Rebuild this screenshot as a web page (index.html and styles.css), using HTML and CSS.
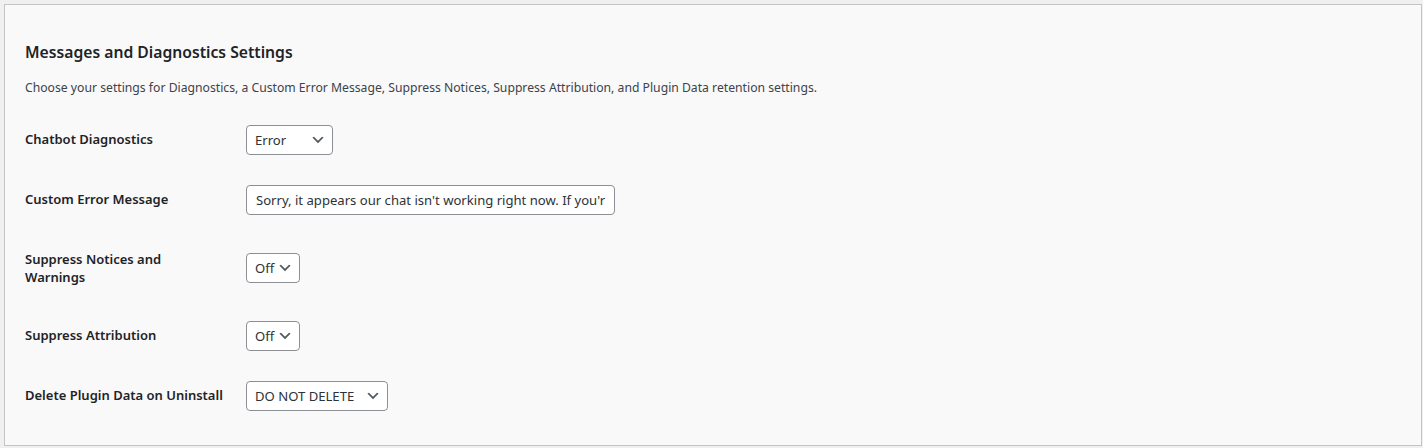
FILE: index.html
```html
<!DOCTYPE html>
<html>
<head>
<meta charset="utf-8">
<link rel="stylesheet" href="styles.css">
</head>
<body>
<div class="panel">
  <h2 class="title">Messages and Diagnostics Settings</h2>
  <p class="desc">Choose your settings for Diagnostics, a Custom Error Message, Suppress Notices, Suppress Attribution, and Plugin Data retention settings.</p>
  <div class="form">
    <div class="row">
      <div class="label">Chatbot Diagnostics</div>
      <div class="field"><span class="select w-error"><span class="val">Error</span><svg class="chev" viewBox="0 0 20 20"><path d="M5 6l5 5 5-5 2 1-7 7-7-7 2-1z"/></svg></span></div>
    </div>
    <div class="row">
      <div class="label">Custom Error Message</div>
      <div class="field"><span class="input">Sorry, it appears our chat isn't working right now. If you'r</span></div>
    </div>
    <div class="row">
      <div class="label">Suppress Notices and<br>Warnings</div>
      <div class="field"><span class="select w-off"><span class="val">Off</span><svg class="chev" viewBox="0 0 20 20"><path d="M5 6l5 5 5-5 2 1-7 7-7-7 2-1z"/></svg></span></div>
    </div>
    <div class="row">
      <div class="label">Suppress Attribution</div>
      <div class="field"><span class="select w-off"><span class="val">Off</span><svg class="chev" viewBox="0 0 20 20"><path d="M5 6l5 5 5-5 2 1-7 7-7-7 2-1z"/></svg></span></div>
    </div>
    <div class="row">
      <div class="label">Delete Plugin Data on Uninstall</div>
      <div class="field"><span class="select w-del"><span class="val">DO NOT DELETE</span><svg class="chev" viewBox="0 0 20 20"><path d="M5 6l5 5 5-5 2 1-7 7-7-7 2-1z"/></svg></span></div>
    </div>
  </div>
</div>
</body>
</html>
```

FILE: styles.css
```css
html, body {
  margin: 0;
  height: 100%;
}
body {
  background: #f0f0f1;
  padding: 4px 1px 2px 4px;
  box-sizing: border-box;
  font-family: "Noto Sans", "Open Sans", sans-serif;
  color: #1d2327;
}
.panel {
  box-sizing: border-box;
  height: 100%;
  background: #f9f9f9;
  border: 1px solid #c3c4c7;
  padding: 36px 20px 20px 20px;
}
.title {
  margin: 0;
  font-size: 15.7px;
  font-weight: 600;
  line-height: 22px;
  color: #1d2327;
}
.desc {
  margin: 15px 0 0 0;
  font-size: 12.2px;
  line-height: 20px;
  color: #3c434a;
}
.form {
  margin-top: 12px;
}
.row {
  display: flex;
  align-items: stretch;
}
.label {
  width: 200px;
  padding: 20px 10px 20px 0;
  font-size: 13px;
  font-weight: 600;
  line-height: 18px;
  color: #1d2327;
}
.field {
  padding: 15px 10px 15px 11px;
  display: flex;
  align-items: center;
}
.select, .input {
  box-sizing: border-box;
  height: 30px;
  border: 1px solid #8c8f94;
  border-radius: 4px;
  background: #fff;
  font-size: 13.1px;
  color: #2c3338;
  display: flex;
  align-items: center;
}
.select {
  padding: 0 6px 0 8px;
  justify-content: space-between;
}
.chev {
  width: 16px;
  height: 16px;
  fill: #50575e;
  flex: none;
}
.w-error { width: 87px; }
.w-off { width: 54px; }
.w-del { width: 142px; }
.input {
  width: 369px;
  padding: 0 9px;
  white-space: nowrap;
  overflow: hidden;
}
```
